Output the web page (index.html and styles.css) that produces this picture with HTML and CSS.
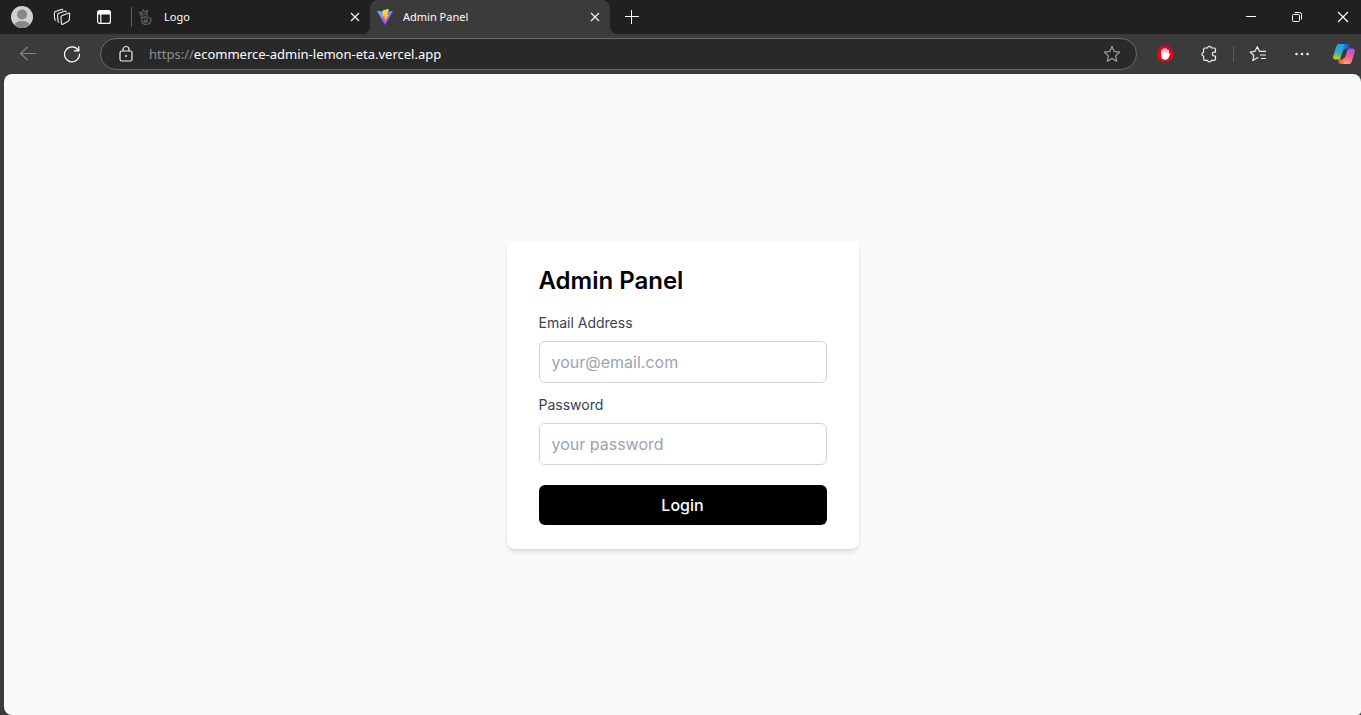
FILE: index.html
```html
<!DOCTYPE html>
<html lang="en">
<head>
<meta charset="utf-8">
<meta name="viewport" content="width=device-width, initial-scale=1">
<title>Admin Panel</title>
<link rel="stylesheet" href="styles.css">
</head>
<body class="browser">
<header class="tab-strip">
  <button class="icon-button avatar" aria-label="Profile">
    <svg width="22" height="22" viewBox="0 0 22 22"><defs><clipPath id="avatar-clip"><circle cx="11" cy="11" r="11"/></clipPath></defs><g clip-path="url(#avatar-clip)"><rect width="22" height="22" fill="#d2d0ce"/><circle cx="11" cy="8.500" r="5" fill="#8a8886"/><ellipse cx="11" cy="20" rx="8" ry="5" fill="#8a8886"/></g></svg>
  </button>
  <button class="icon-button workspaces" aria-label="Workspaces">
    <svg width="18" height="18" viewBox="0 0 18 18" fill="none" stroke="#f2f2f2" stroke-width="1.100" stroke-linejoin="round" stroke-linecap="round"><path d="M9.200 7.400 15.600 5.200Q16.800 4.900 16.700 6L16.300 11.500Q16.200 12.600 15.200 13.200L9.800 16.200Q8.500 16.800 8.400 15.500L8 9Q8 7.800 9.200 7.400z"/><path d="M5.900 14.200Q5 14 4.900 12.800L4.600 7Q4.600 5.700 5.700 5.300L11.800 3.200Q13 2.900 13.200 3.900"/><path d="M2.500 12.300Q1.700 12 1.600 11L1.300 5.300Q1.300 4 2.400 3.600L8.300 1.400Q9.500 1 9.800 2"/></svg>
  </button>
  <button class="icon-button tab-actions" aria-label="Tab actions">
    <svg width="16" height="16" viewBox="0 0 16 16" fill="none" stroke="#fff" stroke-width="1.200"><rect x="1.600" y="1.600" width="12.800" height="12.800" rx="2"/><path d="M2 2.500h12v2.500H2z" fill="#fff"/><path d="M4.800 5v9"/></svg>
  </button>
  <nav class="tabs" aria-label="Tabs">
    <div class="tab">
      <svg class="favicon" width="16" height="16" viewBox="0 0 16 16" fill="none" stroke="#606062" stroke-width="1.100"><path d="M1.500 3.200 4 4 5.500.8 7 3 9.500 1.500 9 4.500 3 6 1.500 3.200zM3 6l1.500 2.500L9 7.500V4.500M2.500 9 8 8.500M3.500 9.500l.5 4.500q2 1.500 4 1.500 5-.5 5-4.500 0-2.500-2-2.500t-2 2q0 1.500-1.500 1.200L6 10.500M5 12l2.500 1.500L10 12"/></svg>
      <span class="tab-title">Logo</span>
      <button class="icon-button tab-close" aria-label="Close Logo"><svg width="10" height="10" viewBox="0 0 10 10" stroke="#eee" stroke-width="1.300"><path d="m1 1 8 8M9 1 1 9"/></svg></button>
    </div>
    <div class="tab tab-active">
      <svg class="favicon" width="16" height="16" viewBox="0 0 16 16"><defs><linearGradient id="vite-shield" x1="0" y1="0" x2=".6" y2="1"><stop stop-color="#41d1ff"/><stop offset=".7" stop-color="#a650ff"/><stop offset="1" stop-color="#bd34fe"/></linearGradient><linearGradient id="vite-bolt" x1="0" y1="0" x2="0" y2="1"><stop stop-color="#ffdc55"/><stop offset="1" stop-color="#ffa800"/></linearGradient></defs><path d="M15.700 2.500 8.500 15.500q-.4.600-.8 0L.3 2.500q-.3-.7.400-.6L8 3.100l7.300-1.200q.7-.1.400.6z" fill="url(#vite-shield)"/><path d="M11.500.1 6 1.200l-.3.400-.3 5.800.3.200 1.800-.4-.5 2.500 1.400-.3-.8 4 4.400-8-2 .3L12 .4z" fill="url(#vite-bolt)"/></svg>
      <span class="tab-title">Admin Panel</span>
      <button class="icon-button tab-close" aria-label="Close Admin Panel"><svg width="10" height="10" viewBox="0 0 10 10" stroke="#eee" stroke-width="1.300"><path d="m1 1 8 8M9 1 1 9"/></svg></button>
    </div>
  </nav>
  <button class="icon-button new-tab" aria-label="New tab"><svg width="14" height="14" viewBox="0 0 14 14" stroke="#fff"><path d="M0 6.500h14M6.500 0v14"/></svg></button>
  <div class="window-controls">
    <button class="icon-button" aria-label="Minimize"><svg width="10" height="10" viewBox="0 0 10 10" stroke="#fff"><path d="M0 4.500h10"/></svg></button>
    <button class="icon-button" aria-label="Restore"><svg width="10" height="10" viewBox="0 0 10 10" fill="none" stroke="#fff"><rect x=".5" y="2.500" width="7" height="7" rx="1"/><path d="M2.500.5H7.500Q9.500.5 9.500 2.500V7.500"/></svg></button>
    <button class="icon-button" aria-label="Close window"><svg width="12" height="12" viewBox="0 0 12 12" stroke="#fff" stroke-width="1.200"><path d="m1 1 10 10M11 1 1 11"/></svg></button>
  </div>
</header>
<div class="toolbar">
  <div class="toolbar-group">
    <button class="icon-button tool" aria-label="Back"><svg width="18" height="18" viewBox="0 0 18 18" fill="none" stroke="#858585" stroke-width="1.200"><path d="M17 8.500H1.500M8.500 2 1.500 8.500 8.500 15"/></svg></button>
    <button class="icon-button tool" aria-label="Refresh"><svg width="18" height="18" viewBox="0 0 18 18" fill="none" stroke="#fff" stroke-width="1.200" stroke-linecap="round"><path d="M15.400 5.500A7.500 7.500 0 1 0 16.500 9M15.800 1.500V5.800H11.300"/></svg></button>
  </div>
  <div class="address-bar">
    <svg width="16" height="18" viewBox="0 0 16 18" fill="none" stroke="#eee" stroke-width="1.200"><rect x="2" y="6" width="12" height="10" rx="1.800"/><path d="M5 6V4.500a3 3 0 0 1 6 0V6"/><circle cx="8" cy="11" r="1" fill="#eee" stroke="none"/></svg>
    <a class="address" href="#" aria-label="Address"><span class="scheme">https://</span>ecommerce-admin-lemon-eta.vercel.app</a>
    <button class="icon-button" aria-label="Add to favorites"><svg width="18" height="18" viewBox="0 0 18 18" fill="none" stroke="#a8a8a8" stroke-width="1.100" stroke-linejoin="round"><path d="m9 1.500 2.300 5 5.300.6-4 3.700 1.100 5.400L9 13.500l-4.700 2.700 1.100-5.400-4-3.700 5.300-.6z"/></svg></button>
  </div>
  <div class="toolbar-group">
    <button class="icon-button tool" aria-label="Ad blocker"><svg width="16" height="16" viewBox="0 0 16 16"><path d="M4.700 0h6.600L16 4.700v6.600L11.300 16H4.700L0 11.300V4.700z" fill="#e30613"/><path d="M5 7V4.200M7 7V2.900M9 7V2.900M11 7.500V4.200" stroke="#fff" stroke-width="1.500" stroke-linecap="round"/><path d="M4.300 6.500h7.400v2l1-1.200q.9-.4.700.5l-2.100 4.500q-.8 1.400-2.600 1.400H8q-3.700 0-3.700-4z" fill="#fff"/></svg></button>
    <button class="icon-button tool" aria-label="Extensions"><svg width="18" height="18" viewBox="0 0 18 18" fill="none" stroke="#eee" stroke-width="1.200" stroke-linejoin="round"><path d="M5 3H7.500A2 2 0 0 1 11.400 3H14Q15.500 3 15.500 4.500V7.200H14.300A1.900 1.900 0 0 0 14.300 11H15.500V14Q15.500 15.300 14 15.300H11.400A2 2 0 0 1 7.500 15.300H5Q3.600 15.300 3.600 14V11.200A2.100 2.100 0 0 1 3.600 7.100V4.500Q3.600 3 5 3z"/></svg></button>
  </div>
  <div class="divider"></div>
  <div class="toolbar-group">
    <button class="icon-button tool" aria-label="Favorites"><svg width="18" height="18" viewBox="0 0 18 18" fill="none" stroke="#eee" stroke-width="1.200" stroke-linejoin="round"><path d="M9.500 13 8.200 12.800 3.800 15.500 4.800 10.500 1.200 7 6 6.300 8.300 1.700 10.500 6.300H17M11 10H17M12 13.500H17"/></svg></button>
    <button class="icon-button tool" aria-label="Settings and more"><svg width="14" height="4" viewBox="0 0 14 4" fill="#eee"><circle cx="1.500" cy="2" r="1.300"/><circle cx="7" cy="2" r="1.300"/><circle cx="12.500" cy="2" r="1.300"/></svg></button>
  </div>
  <button class="icon-button tool copilot" aria-label="Copilot">
    <svg width="22" height="20" viewBox="0 0 22 20"><defs><linearGradient id="cp-left" x1=".3" y1="0" x2="0" y2="1"><stop offset=".1" stop-color="#1ba4f0"/><stop offset=".5" stop-color="#38b0a8"/><stop offset="1" stop-color="#f5d000"/></linearGradient><linearGradient id="cp-top" x1="0" y1="0" x2="1" y2="0"><stop stop-color="#1695f0"/><stop offset="1" stop-color="#1445c8"/></linearGradient><linearGradient id="cp-right" x1=".6" y1="0" x2=".3" y2="1"><stop stop-color="#a955ed"/><stop offset=".5" stop-color="#f15f90"/><stop offset="1" stop-color="#ffae69"/></linearGradient><linearGradient id="cp-base" x1="0" y1="0" x2="1" y2="0"><stop stop-color="#f05a28"/><stop offset="1" stop-color="#ff8a5c"/></linearGradient></defs><path d="M6 0H13.500L11.500 2 7.500 14Q7 15.500 5.500 15.500H2.500Q-.6 15.500.3 12L3.200 2.500Q4 0 6 0z" fill="url(#cp-left)"/><path d="M11 0H14Q16 0 16.500 2L17 4.500H13.500Q11.500 4.500 10.800 6.500L9.700 5z" fill="url(#cp-top)"/><path d="M16.500 4.500H19.500Q22.600 4.500 21.700 8L18.800 17.500Q18 20 16 20H8.500L10.500 18 14.500 6Q15 4.500 16.500 4.500z" fill="url(#cp-right)"/><path d="M11 20H8Q6 20 5.500 18L5 15.500H8.500Q10.500 15.500 11.200 13.500L12.300 15z" fill="url(#cp-base)"/></svg>
  </button>
</div>
<main class="page">
  <section class="login-card">
    <h1 class="login-title">Admin Panel</h1>
    <form class="login-form">
      <div class="field">
        <label class="field-label" for="email">Email Address</label>
        <input class="field-input" id="email" type="email" placeholder="your@email.com">
      </div>
      <div class="field">
        <label class="field-label" for="password">Password</label>
        <input class="field-input" id="password" type="password" placeholder="your password">
      </div>
      <button class="login-button" type="submit">Login</button>
    </form>
  </section>
</main>
</body>
</html>
```
FILE: styles.css
```css
* { box-sizing: border-box; }

.browser {
  margin: 0;
  min-height: 100vh;
  display: flex;
  flex-direction: column;
  background: #3b3b3b;
  color: #fff;
  font-family: "Noto Sans", "Open Sans", sans-serif;
}

.icon-button {
  display: flex;
  flex: none;
  align-items: center;
  justify-content: center;
  margin: 0;
  padding: 0;
  border: 0;
  background: none;
}

.tab-strip {
  display: flex;
  align-items: center;
  height: 34px;
  padding-left: 11px;
  background: #202020;
}
.workspaces { margin-left: 20px; }
.tab-actions { margin: 0 19px 0 25px; }

.tabs {
  display: flex;
  align-items: center;
  align-self: stretch;
}
.tab {
  display: flex;
  align-items: center;
  gap: 10px;
  width: 239px;
  height: 20px;
  padding: 0 10px 0 6px;
  border-left: 1px solid #5c5c5c;
}
.tab-active {
  position: relative;
  width: 240px;
  height: 34px;
  padding-left: 7px;
  border: 0;
  border-radius: 8px 8px 0 0;
  background: #3b3b3b;
}
.tab-active::before,
.tab-active::after {
  content: "";
  position: absolute;
  bottom: 0;
  width: 8px;
  height: 8px;
}
.tab-active::before {
  left: -8px;
  background: radial-gradient(circle at 0 0, #202020 8px, #3b3b3b 8px);
}
.tab-active::after {
  right: -8px;
  background: radial-gradient(circle at 100% 0, #202020 8px, #3b3b3b 8px);
}
.favicon { flex: none; }
.tab-title {
  flex: 1;
  font-size: 11px;
  line-height: 16px;
}
.new-tab { margin-left: 15px; }
.window-controls {
  display: flex;
  gap: 10px;
  margin-left: auto;
}
.window-controls .icon-button {
  width: 36px;
  height: 34px;
}

.toolbar {
  display: flex;
  align-items: center;
  gap: 12px;
  height: 40px;
  padding: 0 1px 0 12px;
}
.toolbar-group {
  display: flex;
  gap: 12px;
}
.tool {
  width: 32px;
  height: 32px;
}
.divider {
  width: 1px;
  height: 16px;
  margin: 0 -4px;
  background: #5c5c5c;
}
.copilot { margin-left: -2px; }
.address-bar {
  display: flex;
  flex: 1;
  align-items: center;
  height: 32px;
  padding: 0 15px 0 17px;
  border: 1px solid #6a6a6a;
  border-radius: 16px;
  background: #292929;
}
.address {
  flex: 1;
  margin-left: 15px;
  color: #fff;
  font-size: 13px;
  line-height: 20px;
  text-decoration: none;
}
.scheme { color: #8f8f8f; }

.page {
  display: flex;
  flex: 1;
  align-items: center;
  justify-content: center;
  margin-left: 4px;
  border-radius: 8px 8px 4px 8px;
  background: #f9fafc;
  color: #000;
  font-family: Inter, sans-serif;
}
.login-card {
  width: 100%;
  max-width: 352px;
  padding: 24px 32px;
  border-radius: 8px;
  background: #fff;
  box-shadow: 0 4px 6px -1px rgba(0, 0, 0, 0.1), 0 2px 4px -2px rgba(0, 0, 0, 0.1);
}
.login-title {
  margin: 0 0 16px;
  font-size: 24px;
  font-weight: 600;
  line-height: 32px;
}
.login-form {
  display: flex;
  flex-direction: column;
  gap: 12px;
}
.field {
  display: flex;
  flex-direction: column;
  gap: 8px;
}
.field-label {
  color: #374151;
  font-size: 14px;
  font-weight: 400;
  line-height: 20px;
}
.field-input {
  width: 100%;
  padding: 8px 12px;
  border: 1px solid #d1d5db;
  border-radius: 6px;
  background: #fff;
  font: 400 16px/24px Inter, sans-serif;
}
.field-input::placeholder { color: #9ca3af; }
.login-button {
  margin-top: 8px;
  padding: 8px 16px;
  border: 0;
  border-radius: 6px;
  background: #000;
  color: #fff;
  font: 500 16px/24px Inter, sans-serif;
}
```
